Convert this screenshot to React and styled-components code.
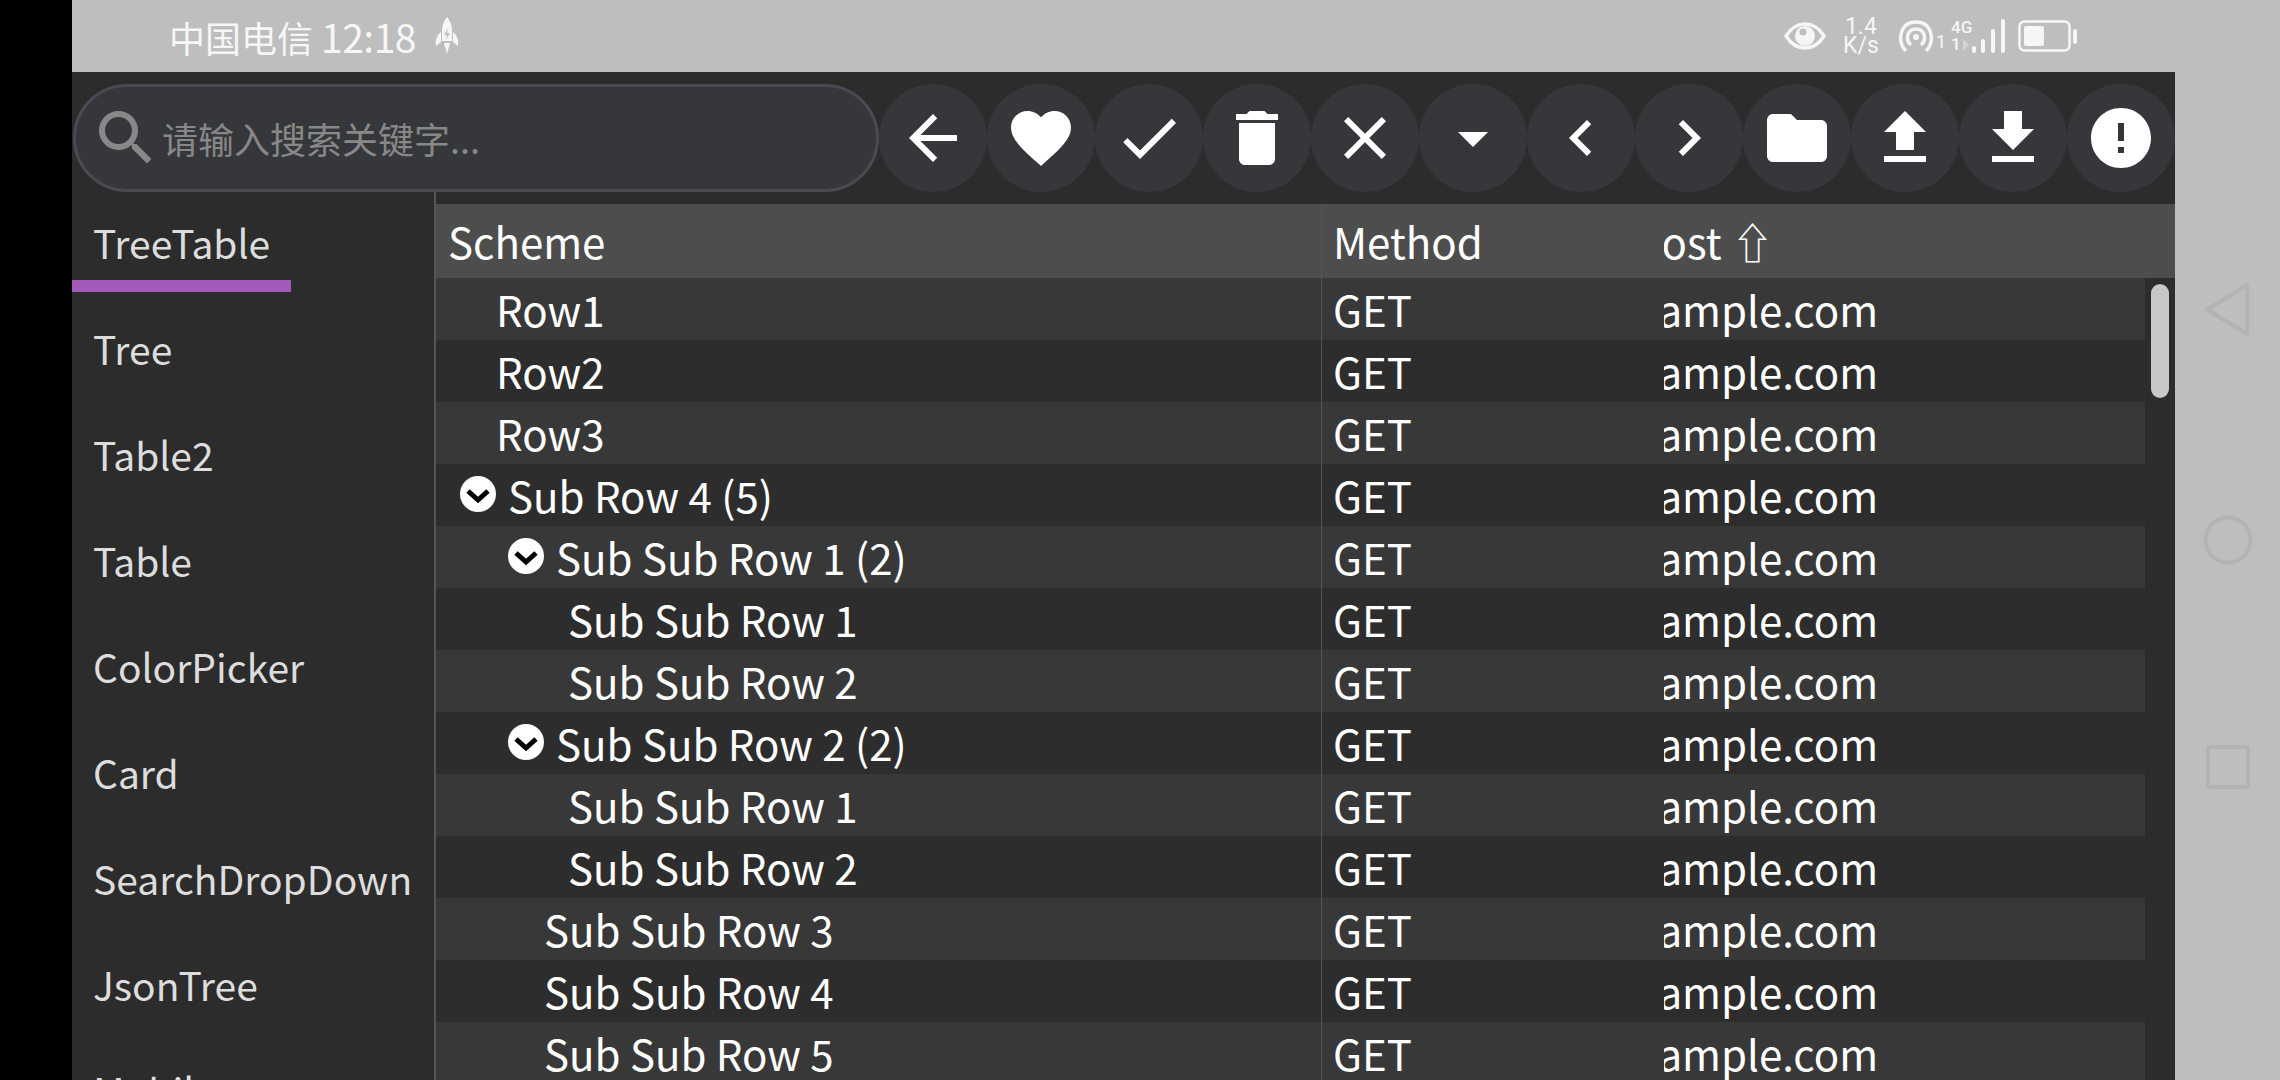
import React from 'react';
import styled, { createGlobalStyle } from 'styled-components';
import {
  MdArrowBack, MdFavorite, MdCheck, MdDelete, MdClose, MdArrowDropDown,
  MdChevronLeft, MdChevronRight, MdFolder, MdFileUpload, MdFileDownload, MdError, MdSearch,
} from 'react-icons/md';

const FONT = '"Noto Sans CJK SC", "Noto Sans", sans-serif';

const GlobalStyle = createGlobalStyle`
  html, body {
    margin: 0;
    background: #bebebe;
    overflow: hidden;
  }
  * {
    box-sizing: border-box;
  }
`;

const Screen = styled.div`
  display: flex;
  width: 2280px;
  height: 1080px;
  overflow: hidden;
  font-family: ${FONT};
  background: #bebebe;
`;

const BlackEdge = styled.div`
  width: 72px;
  background: #000;
`;

const Center = styled.div`
  width: 2103px;
  display: flex;
  flex-direction: column;
`;

const NavBar = styled.div`
  width: 105px;
  display: flex;
  flex-direction: column;
  align-items: center;
  justify-content: center;
  gap: 171px;
`;

const StatusBar = styled.div`
  height: 72px;
  flex: none;
  display: flex;
  align-items: center;
  padding: 0 97px 0 97px;
  color: #f6f6f6;
`;

const Carrier = styled.span`
  font-size: 36px;
  font-weight: 400;
  line-height: 72px;
  white-space: nowrap;
`;

const Clock = styled.span`
  margin-left: 8px;
  font-size: 39px;
  letter-spacing: -0.5px;
`;

const StatusIcons = styled.div`
  margin-left: auto;
  display: flex;
  align-items: center;
`;

const Speed = styled.div`
  display: flex;
  flex-direction: column;
  align-items: center;
  width: 34px;
  margin: 0 20px 0 18px;
  font-family: "Roboto", sans-serif;
  line-height: 19px;
  font-size: 23px;
`;

const SpeedLine = styled.div`
  height: 19px;
`;

const SimNumber = styled.span`
  align-self: flex-start;
  margin: 16px 5px 0 2px;
  font-family: "Roboto", sans-serif;
  font-size: 18px;
  line-height: 18px;
`;

const Network = styled.div`
  display: flex;
  flex-direction: column;
  width: 21px;
  font-family: "Roboto", sans-serif;
  font-size: 17px;
  font-weight: 500;
  line-height: 17px;
`;

const NetworkDown = styled.div`
  display: flex;
  align-items: center;
  gap: 2px;
`;

const NetworkArrow = styled.span`
  width: 0;
  height: 0;
  border-left: 6px solid #d4d4d4;
  border-top: 6px solid transparent;
  border-bottom: 6px solid transparent;
`;

const Body = styled.div`
  flex: 1;
  min-height: 0;
  display: flex;
  flex-direction: column;
  background: #2c2c2c;
`;

const Toolbar = styled.div`
  display: flex;
  flex: none;
  padding: 12px 0 0 1px;
`;

const SearchBox = styled.div`
  width: 806px;
  height: 108px;
  display: flex;
  align-items: center;
  padding-left: 14px;
  background: #36373a;
  border: 3px solid #4a4b52;
  border-radius: 54px;
  color: #888;
`;

const SearchInput = styled.input`
  flex: 1;
  min-width: 0;
  margin-left: 0;
  padding: 0;
  border: 0;
  outline: 0;
  background: transparent;
  font-family: ${FONT};
  font-size: 36px;
  font-weight: 400;
  color: #fff;

  &::placeholder {
    color: #888;
    opacity: 1;
  }
`;

const RoundButton = styled.button`
  width: 108px;
  height: 108px;
  flex: none;
  display: flex;
  align-items: center;
  justify-content: center;
  padding: 0;
  border: 0;
  border-radius: 50%;
  background: #36373a;
  color: #fff;
`;

const Content = styled.div`
  flex: 1;
  min-height: 0;
  display: flex;
`;

const Sidebar = styled.div`
  width: 364px;
  flex: none;
  display: flex;
  flex-direction: column;
  align-items: flex-start;
  overflow: hidden;
  border-right: 2px solid #555;
`;

const Tab = styled.div`
  flex: none;
  height: 100px;
  margin-bottom: 6px;
  padding: 14px 21px 0;
  font-size: 39px;
  font-weight: 400;
  line-height: 72px;
  color: #ddd;
  white-space: nowrap;
  border-bottom: 12px solid ${(p) => (p.$active ? '#a25bba' : 'transparent')};
`;

const TableArea = styled.div`
  flex: 1;
  min-width: 0;
  display: flex;
  flex-direction: column;
  padding-top: 12px;
`;

const HeaderRow = styled.div`
  height: 74px;
  flex: none;
  display: grid;
  grid-template-columns: 886px 342px 1fr;
  background: #4d4d4d;
  color: #fff;
  font-size: 42px;
  font-weight: 400;
  line-height: 74px;
`;

const TableBody = styled.div`
  flex: 1;
  min-height: 0;
  display: flex;
`;

const Rows = styled.div`
  flex: 1;
  min-width: 0;
  overflow: hidden;
`;

const Row = styled.div`
  height: 62px;
  display: grid;
  grid-template-columns: 886px 342px 1fr;
  background: ${(p) => (p.$odd ? '#383838' : '#2d2d2d')};
  color: #fff;
  font-size: 42px;
  font-weight: 400;
  line-height: 62px;
`;

const Cell = styled.div`
  display: flex;
  align-items: center;
  padding-left: ${(p) => p.$indent || 11}px;
  border-right: ${(p) => (p.$divider ? '1px solid #555' : '0')};
  white-space: nowrap;
`;

const ClippedCell = styled.div`
  overflow: hidden;
  white-space: nowrap;
`;

// the last column is scrolled sideways in the screenshot
const Scrolled = styled.span`
  display: inline-flex;
  align-items: center;
  margin-left: -${(p) => p.$by}px;
`;

const SortArrow = styled.span`
  margin-left: 10px;
  font-size: 42px;
`;

const ExpandIcon = styled.svg`
  width: 36px;
  height: 36px;
  flex: none;
  margin: -2px 12px 0 0;
`;

const ScrollTrack = styled.div`
  width: 30px;
  flex: none;
  padding: 6px 6px 0;
`;

const ScrollThumb = styled.div`
  height: 114px;
  border-radius: 9px;
  background: #c8c8c8;
`;

const TABS = ['TreeTable', 'Tree', 'Table2', 'Table', 'ColorPicker', 'Card', 'SearchDropDown', 'JsonTree', 'Mobile'];

const BUTTONS = [
  MdArrowBack, MdFavorite, MdCheck, MdDelete, MdClose, MdArrowDropDown,
  MdChevronLeft, MdChevronRight, MdFolder, MdFileUpload, MdFileDownload, MdError,
];

// indent = distance from the left of the table to the icon or the text
const ROWS = [
  { name: 'Row1', indent: 60 },
  { name: 'Row2', indent: 60 },
  { name: 'Row3', indent: 60 },
  { name: 'Sub Row 4 (5)', indent: 24, open: true },
  { name: 'Sub Sub Row 1 (2)', indent: 72, open: true },
  { name: 'Sub Sub Row 1', indent: 132 },
  { name: 'Sub Sub Row 2', indent: 132 },
  { name: 'Sub Sub Row 2 (2)', indent: 72, open: true },
  { name: 'Sub Sub Row 1', indent: 132 },
  { name: 'Sub Sub Row 2', indent: 132 },
  { name: 'Sub Sub Row 3', indent: 108 },
  { name: 'Sub Sub Row 4', indent: 108 },
  { name: 'Sub Sub Row 5', indent: 108 },
];

const Rocket = () => (
  <svg width="26" height="38" viewBox="0 0 26 38" style={{ marginLeft: 18 }}>
    <path fill="#f6f6f6" d="M13 0c3 4 5 8 5 13v11H8V13c0-5 2-9 5-13zM7 15v10l-5 4c-1-6 1-11 5-14zm12 0c4 3 6 8 5 14l-5-4V15zM10 26h6l-3 11z" />
    <path fill="#bebebe" d="M14 11l-4 7h3l-1 5 4-7h-3z" />
  </svg>
);

const Eye = () => (
  <svg width="42" height="28" viewBox="0 0 42 28">
    <path fill="none" stroke="#f6f6f6" strokeWidth="3.5" d="M2 14C7 6 13 2 21 2s14 4 19 12c-5 8-11 12-19 12S7 22 2 14z" />
    <circle cx="21" cy="14" r="10" fill="#f6f6f6" />
    <circle cx="19" cy="10" r="3.5" fill="#bebebe" />
  </svg>
);

const Hotspot = () => (
  <svg width="36" height="32" viewBox="0 0 36 32" fill="none" stroke="#f6f6f6" strokeWidth="3.5" strokeLinecap="round">
    <path d="M7 30C-1 20 2 2 18 2s19 18 11 28" />
    <path d="M12 24C7 18 10 9 18 9s11 9 6 15" />
    <circle cx="18" cy="17" r="3" fill="#f6f6f6" stroke="none" />
  </svg>
);

const Signal = () => (
  <svg width="33" height="34" viewBox="0 0 33 34" fill="#f6f6f6" style={{ marginRight: 13 }}>
    <rect x="0" y="27" width="4" height="7" rx="2" />
    <rect x="9" y="20" width="4" height="14" rx="2" />
    <rect x="19" y="10" width="4" height="24" rx="2" />
    <rect x="29" y="0" width="4" height="34" rx="2" />
  </svg>
);

const Battery = () => (
  <svg width="60" height="32" viewBox="0 0 60 32">
    <rect x="1.5" y="1.5" width="50" height="29" rx="5" fill="none" stroke="#f6f6f6" strokeWidth="2.5" />
    <rect x="6" y="6" width="20" height="20" rx="2" fill="#f6f6f6" />
    <rect x="55" y="9" width="4" height="15" rx="2" fill="#f6f6f6" />
  </svg>
);

const Expand = () => (
  <ExpandIcon viewBox="0 0 36 36">
    <circle cx="18" cy="18" r="18" fill="#fff" />
    <polyline points="8,15 18,24 28,15" fill="none" stroke="#000" strokeWidth="5" />
  </ExpandIcon>
);

const NavIcon = ({ children }) => (
  <svg width="60" height="60" viewBox="0 0 60 60" fill="none" stroke="#b3b3b3" strokeWidth="4" strokeLinejoin="round">
    {children}
  </svg>
);

const App = () => (
  <Screen>
    <GlobalStyle />
    <BlackEdge />
    <Center>
      <StatusBar>
        <Carrier>中国电信<Clock>12:18</Clock></Carrier>
        <Rocket />
        <StatusIcons>
          <Eye />
          <Speed>
            <SpeedLine>1.4</SpeedLine>
            <SpeedLine>K/s</SpeedLine>
          </Speed>
          <Hotspot />
          <SimNumber>1</SimNumber>
          <Network>
            <span>4G</span>
            <NetworkDown>
              <span>1</span>
              <NetworkArrow />
            </NetworkDown>
          </Network>
          <Signal />
          <Battery />
        </StatusIcons>
      </StatusBar>
      <Body>
        <Toolbar>
          <SearchBox>
            <MdSearch size={72} />
            <SearchInput placeholder="请输入搜索关键字..." />
          </SearchBox>
          {BUTTONS.map((Icon, i) => (
            <RoundButton key={i}>
              <Icon size={72} />
            </RoundButton>
          ))}
        </Toolbar>
        <Content>
          <Sidebar>
            {TABS.map((tab, i) => (
              <Tab key={tab} $active={i === 0}>{tab}</Tab>
            ))}
          </Sidebar>
          <TableArea>
            <HeaderRow>
              <Cell $divider $indent={12}>Scheme</Cell>
              <Cell>Method</Cell>
              <ClippedCell>
                <Scrolled $by={33}>Host<SortArrow>⇧</SortArrow></Scrolled>
              </ClippedCell>
            </HeaderRow>
            <TableBody>
              <Rows>
                {ROWS.map((row, i) => (
                  <Row key={i} $odd={i % 2 === 0}>
                    <Cell $divider $indent={row.indent}>
                      {row.open && <Expand />}
                      {row.name}
                    </Cell>
                    <Cell>GET</Cell>
                    <ClippedCell>
                      <Scrolled $by={49}>example.com</Scrolled>
                    </ClippedCell>
                  </Row>
                ))}
              </Rows>
              <ScrollTrack>
                <ScrollThumb />
              </ScrollTrack>
            </TableBody>
          </TableArea>
        </Content>
      </Body>
    </Center>
    <NavBar>
      <NavIcon>
        <path d="M49 6v49L9 30.5z" />
      </NavIcon>
      <NavIcon>
        <circle cx="30" cy="30" r="22.5" />
      </NavIcon>
      <NavIcon>
        <rect x="10" y="6" width="40" height="40" rx="2" />
      </NavIcon>
    </NavBar>
  </Screen>
);

export default App;
